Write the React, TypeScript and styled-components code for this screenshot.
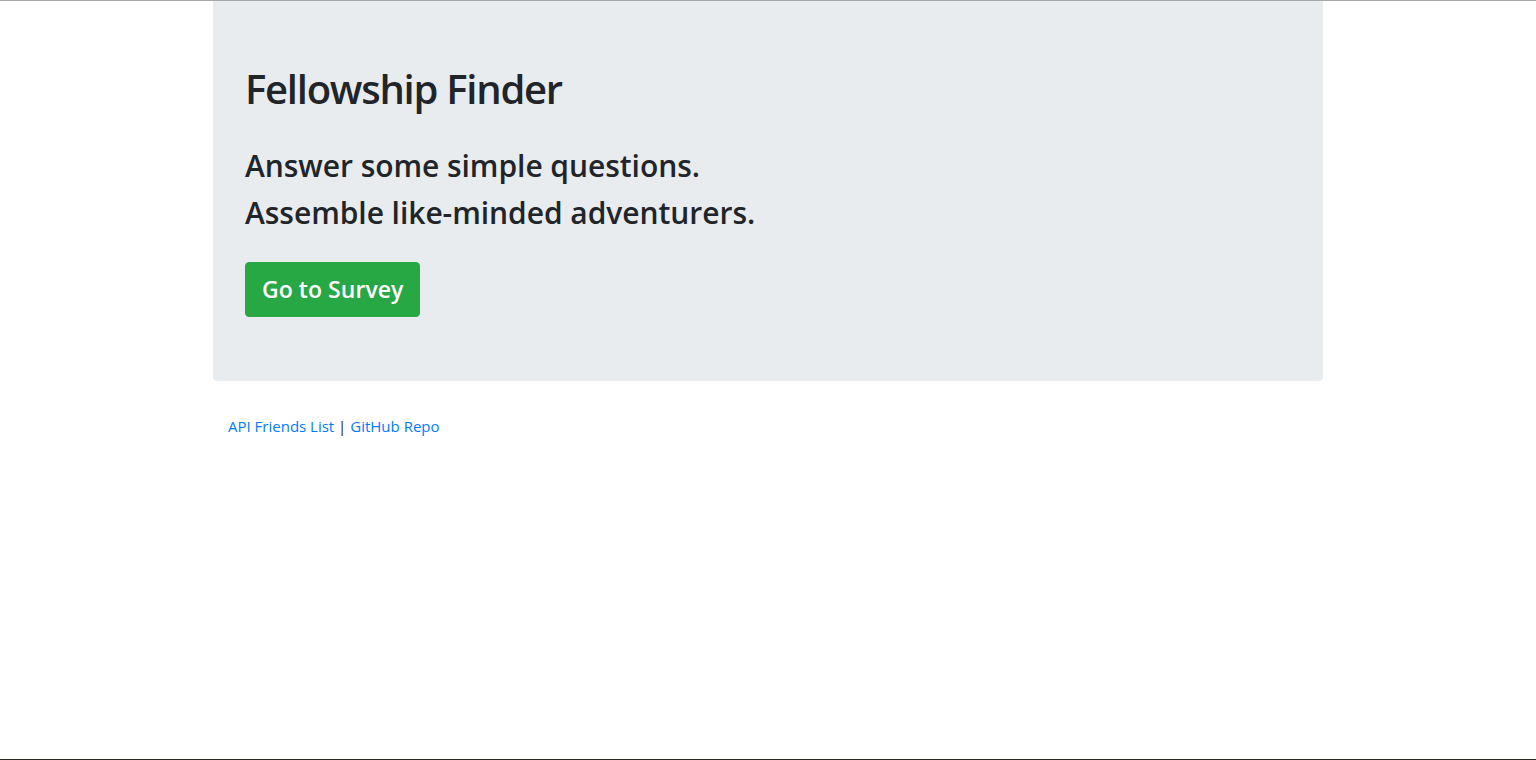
import React from "react";
import styled, { createGlobalStyle } from "styled-components";

const GlobalStyle = createGlobalStyle`
  *, *::before, *::after { box-sizing: border-box; }
  html, body { margin: 0; padding: 0; }
  body {
    font-family: "Open Sans", "Noto Sans", "Liberation Sans", sans-serif;
    font-size: 16px;
    line-height: 1.5;
    color: #212529;
    background: #fff;
  }
`;

const Page = styled.div`
  min-height: 760px;
  border-top: 1px solid #a7a7a7;
  border-bottom: 1px solid #2b2a22;
  display: flex;
  flex-direction: column;
`;

const Container = styled.div`
  width: 1140px;
  margin: 0 auto;
  padding: 0 15px;
`;

const Jumbotron = styled.section`
  background: #e9ecef;
  border-radius: 0 0 4px 4px;
  padding: 64px 32px 64px;
  margin-bottom: 33px;
`;

const Title = styled.h1`
  margin: 0 0 33px;
  font-size: 40px;
  font-weight: 600;
  line-height: 48px;
  letter-spacing: -1.25px;
`;

const Tagline = styled.h2`
  margin: 0 0 8px;
  font-size: 30px;
  font-weight: 600;
  line-height: 39px;
  letter-spacing: -0.05px;
`;

const Button = styled.a`
  display: inline-block;
  margin-top: 22px;
  padding: 8px 16px;
  font-size: 23px;
  font-weight: 600;
  line-height: 37px;
  color: #fff;
  background: #28a745;
  border: 1px solid #28a745;
  border-radius: 4px;
  text-decoration: none;
  letter-spacing: 0.05px;
`;

const Footer = styled.p`
  margin: 0;
  padding: 0 15px;
  font-size: 15px;
  line-height: 24px;
`;

const Link = styled.a`
  color: #007bff;
  text-decoration: none;
`;

export default function App() {
  return (
    <>
      <GlobalStyle />
      <Page>
        <Container>
          <Jumbotron>
            <Title>Fellowship Finder</Title>
            <Tagline>Answer some simple questions.</Tagline>
            <Tagline>Assemble like-minded adventurers.</Tagline>
            <Button href="#survey">Go to Survey</Button>
          </Jumbotron>
          <Footer>
            <Link href="#api">API Friends List</Link> | <Link href="#repo">GitHub Repo</Link>
          </Footer>
        </Container>
      </Page>
    </>
  );
}
